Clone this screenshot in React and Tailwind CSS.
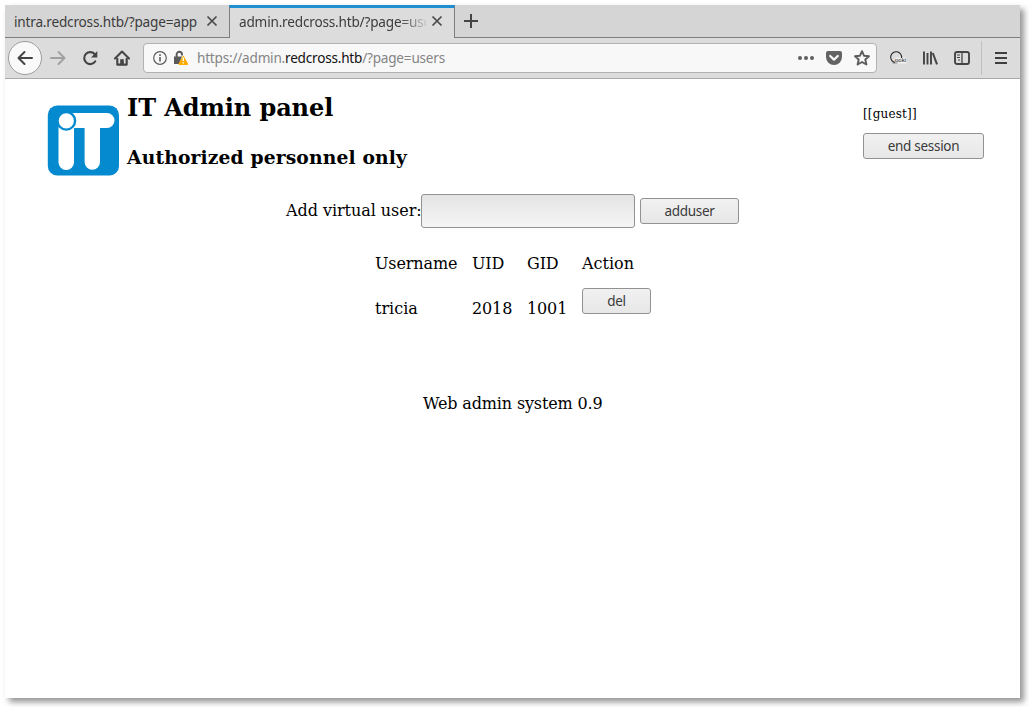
import React from "react";

function CloseIcon() {
  return (
    <svg className="block h-[12px] w-[12px] shrink-0" viewBox="0 0 12 12" fill="none" stroke="#4a4a4a" strokeWidth="1.7">
      <path d="M1.5 1.5 10.5 10.5M10.5 1.5 1.5 10.5" />
    </svg>
  );
}

function TabBar() {
  return (
    <div className="flex h-[33px] bg-[#d5d5d5] text-[13.6px] tracking-[-0.19px] text-[#3c3c3c]">
      <div className="flex w-[224px] items-center border-b border-[#7d7d7d] pl-[9px]">
        <span className="w-[192px] pt-[2px] whitespace-nowrap">intra.redcross.htb/?page=app</span>
        <CloseIcon />
      </div>
      <div className="flex w-[226px] items-center border-x border-t-[3px] border-x-[#7d7d7d] border-t-[#1f8fd2] bg-[#dcdcdc] pb-[4px] pl-[9px]">
        <span className="mr-[5px] w-[187px] overflow-hidden pt-[2px] whitespace-nowrap [mask-image:linear-gradient(to_right,black_86%,transparent_102%)]">
          admin.redcross.htb/?page=users
        </span>
        <CloseIcon />
      </div>
      <div className="flex grow items-center border-b border-[#7d7d7d] pl-[9px]">
        <svg className="block h-[14px] w-[14px]" viewBox="0 0 14 14" stroke="#444" strokeWidth="2">
          <path d="M0 7H14M7 0V14" />
        </svg>
      </div>
    </div>
  );
}

function UrlBar() {
  return (
    <div className="ml-[13px] flex h-[30px] w-[734px] shrink-0 items-center rounded-[4px] border border-[#b1b1b1] bg-[#f8f8f8] pl-[9px]">
      <svg className="block h-[14px] w-[14px]" viewBox="0 0 14 14" fill="none" stroke="#5c5c5c">
        <circle cx="7" cy="7" r="6.3" strokeWidth="1.2" />
        <path d="M7 6V10.6M7 3.3V4.9" strokeWidth="1.6" />
      </svg>
      <svg className="ml-[6px] block h-[16px] w-[16px]" viewBox="0 0 16 16">
        <path d="M3.6 7V4.5a2.7 2.7 0 0 1 5.4 0V5.5" fill="none" stroke="#5a5a5a" strokeWidth="1.9" />
        <path d="M1 6.5H9L6 14H1Z" fill="#5a5a5a" />
        <path d="M10.3 6.5 14.4 14.2H6.2Z" fill="#ffab00" stroke="#ffab00" strokeWidth="1.4" strokeLinejoin="round" />
        <path d="M10.3 7.5V11M10.3 12.2V13.6" stroke="#fff" strokeWidth="1.5" />
      </svg>
      <span className="ml-[8px] w-[601px] whitespace-nowrap pt-px text-[13.6px] tracking-[-0.22px] text-[#858585]">
        https://admin.<span className="text-[#111]">redcross.htb</span>/?page=users
      </span>
      <svg className="block h-[4px] w-[16px]" viewBox="0 0 16 4" fill="#5e5e5e">
        <circle cx="2" cy="2" r="2" />
        <circle cx="8" cy="2" r="2" />
        <circle cx="14" cy="2" r="2" />
      </svg>
      <svg className="ml-[12px] block h-[16px] w-[16px]" viewBox="0 0 16 16">
        <path d="M2 1H14a2 2 0 0 1 2 2V7a8 8 0 0 1-16 0V3a2 2 0 0 1 2-2Z" fill="#636363" />
        <path d="M4.2 6 8 9.6 11.8 6" fill="none" stroke="#f8f8f8" strokeWidth="2.2" strokeLinecap="round" strokeLinejoin="round" />
      </svg>
      <svg className="ml-[12px] block h-[16px] w-[16px]" viewBox="0 0 16 16" fill="none" stroke="#5c5c5c" strokeWidth="1.9" strokeLinejoin="round">
        <path d="M8 1.2 10 5.7 15 6.2 11.3 9.5 12.4 14.5 8 12 3.6 14.5 4.7 9.5 1 6.2 6 5.7Z" />
      </svg>
    </div>
  );
}

function Toolbar() {
  return (
    <div className="flex h-[41px] items-center border-b border-[#a9a9a9] bg-[#dcdcdc] pl-[3px]">
      <div className="flex h-[34px] w-[34px] shrink-0 items-center justify-center rounded-full border border-[#9c9c9c] bg-[#f9f9f9]">
        <svg className="block h-[16px] w-[16px]" viewBox="0 0 16 16" fill="none" stroke="#434343" strokeWidth="2" strokeLinecap="round" strokeLinejoin="round">
          <path d="M15 8H1.5M7.5 2 1.5 8 7.5 14" />
        </svg>
      </div>
      <svg className="ml-[8px] block h-[16px] w-[16px] shrink-0" viewBox="0 0 16 16" fill="none" stroke="#a0a0a0" strokeWidth="1.9" strokeLinecap="round" strokeLinejoin="round">
        <path d="M1 8H14.5M8.5 2 14.5 8 8.5 14" />
      </svg>
      <svg className="ml-[16px] block h-[16px] w-[16px] shrink-0" viewBox="0 0 16 16">
        <path d="M13 4.5A6 6 0 1 0 13.3 11.3" fill="none" stroke="#444" strokeWidth="2.1" strokeLinecap="round" />
        <path d="M15.3 1V7.4H9Z" fill="#444" />
      </svg>
      <svg className="ml-[16px] block h-[16px] w-[16px] shrink-0" viewBox="0 0 16 16">
        <path d="M1 8.5 8 1.5 15 8.5" fill="none" stroke="#444" strokeWidth="2.1" strokeLinecap="round" strokeLinejoin="round" />
        <path d="M3.3 8V14.6H12.7V8" fill="none" stroke="#444" strokeWidth="2.1" strokeLinejoin="round" />
        <path d="M6.2 9.2H9.8V15H6.2Z" fill="#444" />
      </svg>
      <UrlBar />
      <svg className="ml-[12px] block h-[16px] w-[18px] shrink-0" viewBox="0 0 18 16">
        <rect x="6.5" y="7.5" width="11" height="6" fill="#efefef" />
        <path d="M6 12.6A5.5 5.5 0 1 1 12.6 8" fill="none" stroke="#222" strokeWidth="1.1" />
        <path d="M3.5 13H8.5" stroke="#777" strokeWidth="0.8" />
        <text x="6" y="12.3" fontSize="6" fill="#222" fontFamily="Liberation Sans, sans-serif">ooki</text>
      </svg>
      <svg className="ml-[15px] block h-[16px] w-[16px] shrink-0" viewBox="0 0 16 16" stroke="#444" strokeWidth="2">
        <path d="M2 1.5V14.5M5.5 3V14.5M9 1.5V14.5" strokeWidth="1.9" />
        <path d="M10.8 3 15 14.3" />
      </svg>
      <svg className="ml-[16px] block h-[16px] w-[16px] shrink-0" viewBox="0 0 16 16" fill="none" stroke="#444">
        <rect x="1" y="2" width="14" height="12" rx="2" strokeWidth="1.9" />
        <path d="M8 2V14" strokeWidth="1.3" />
        <path d="M3 5H6M3 7.5H6M4 10H6" strokeWidth="1" />
      </svg>
      <div className="ml-[11px] h-[34px] w-px shrink-0 bg-[#c0c0c0]" />
      <svg className="ml-[13px] block h-[12px] w-[12px] shrink-0" viewBox="0 0 12 12" stroke="#3f3f3f" strokeWidth="2">
        <path d="M0 1H12M0 6H12M0 11H12" />
      </svg>
    </div>
  );
}

function Logo() {
  return (
    <svg className="mt-[26px] block h-[71px] w-[72px] shrink-0" viewBox="0 0 72 71">
      <rect x="0.8" y="0.5" width="71.2" height="70" rx="9.5" fill="#058acf" />
      <rect x="11.5" y="15" width="15.5" height="50" rx="7.7" fill="#fff" />
      <path d="M24.5 8H60a7.500 7.500 0 0 1 0 15H53V57a7.700 7.700 0 0 1-15.400 0V23H24.5Z" fill="#fff" />
      <circle cx="19.300" cy="15.800" r="8.800" fill="#fff" stroke="#058acf" strokeWidth="2.400" />
    </svg>
  );
}

function Button({ className, children }) {
  return (
    <button
      className={
        "block h-[26px] rounded-[3px] border border-[#929292] bg-linear-to-b from-[#f1f1f1] to-[#e7e7e7] text-center font-['Noto_Sans',sans-serif] text-[13.5px] leading-[25px] tracking-[-0.3px] text-[#3a3a3a] " +
        className
      }
    >
      {children}
    </button>
  );
}

function AdminPage() {
  return (
    <main className="font-['DejaVu_Serif',serif] text-[16px] leading-[20px] tracking-[-0.12px] text-black">
      <header className="flex h-[115px] pl-[42px]">
        <Logo />
        <div className="ml-[8px] w-[736px] pt-[15px]">
          <h1 className="text-[24px] leading-[28px] font-bold tracking-[-0.08px]">IT Admin panel</h1>
          <h2 className="mt-[24px] text-[18.72px] leading-[22px] font-bold tracking-[0.14px]">Authorized personnel only</h2>
        </div>
        <div className="pt-[27px]">
          <div className="text-[12px] leading-[16px] tracking-[0.17px]">[[guest]]</div>
          <Button className="mt-[11px] w-[121px]">end session</Button>
        </div>
      </header>
      <form className="flex h-[34px] pl-[281px]" onSubmit={(e) => e.preventDefault()}>
        <label htmlFor="username" className="w-[135px] pt-[7px] tracking-[-0.05px] whitespace-nowrap">Add virtual user:</label>
        <input
          id="username"
          className="h-[34px] w-[214px] rounded-[3px] border border-[#929292] bg-linear-to-b from-[#e4e4e4] to-[#f5f5f5] px-2 outline-none"
        />
        <Button className="mt-[4px] ml-[5px] w-[99px]">adduser</Button>
      </form>
      <div className="mt-[26px] grid grid-cols-[97px_55px_55px_69px] pl-[370px]">
        <div>Username</div>
        <div>UID</div>
        <div>GID</div>
        <div className="tracking-normal">Action</div>
        <div className="pt-[25px] tracking-normal">tricia</div>
        <div className="pt-[25px]">2018</div>
        <div className="pt-[25px]">1001</div>
        <Button className="mt-[14px] w-[69px]">del</Button>
      </div>
      <footer className="mt-[75px] pl-[418px] tracking-[-0.15px]">Web admin system 0.9</footer>
    </main>
  );
}

export default function App() {
  return (
    <div className="h-[707px] w-[1029px] overflow-hidden bg-white pt-[5px] pl-[5px] font-['Noto_Sans',sans-serif]">
      <div className="h-[693px] w-[1015px] bg-white shadow-[4px_4px_6px_rgba(0,0,0,0.42)]">
        <TabBar />
        <Toolbar />
        <AdminPage />
      </div>
    </div>
  );
}
